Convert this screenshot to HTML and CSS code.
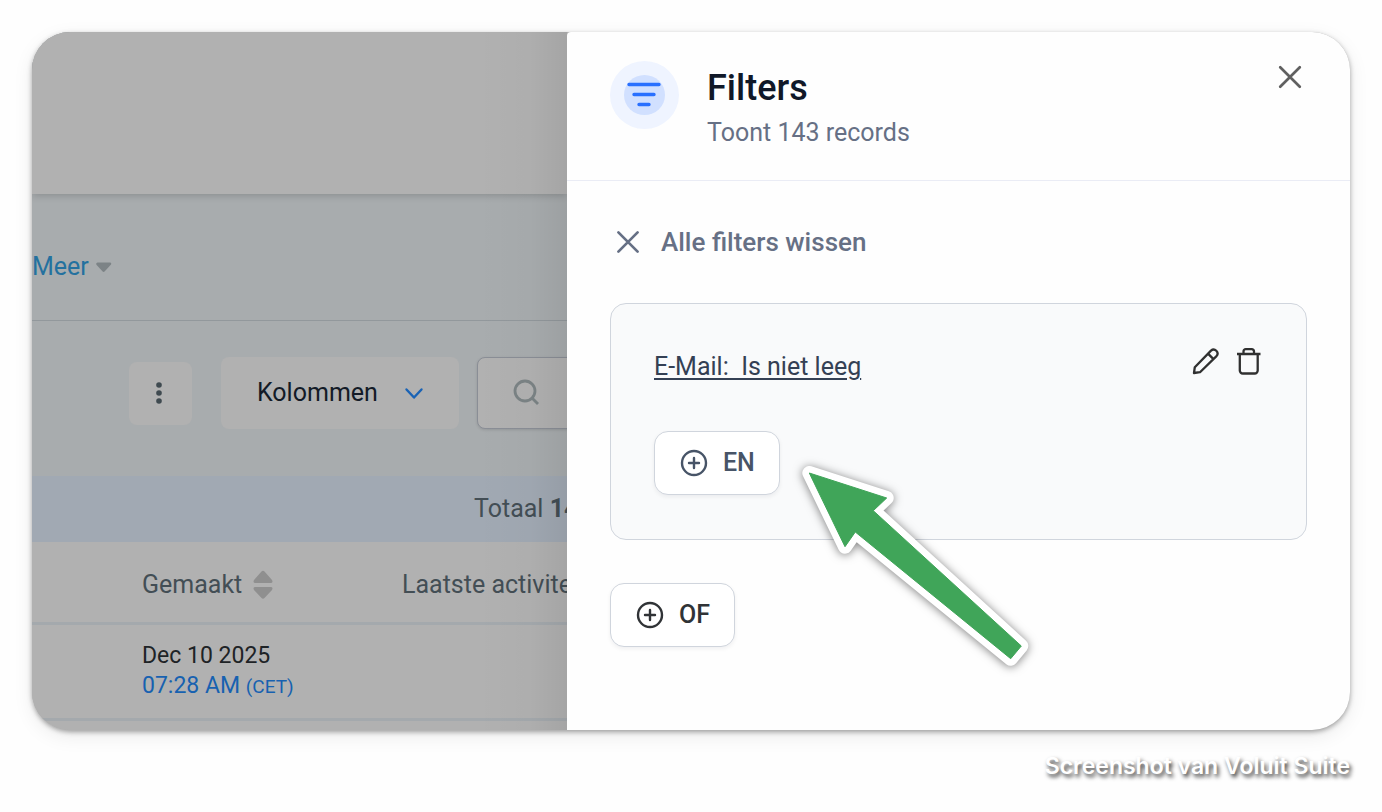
FILE: index.html
```html
<!DOCTYPE html>
<html lang="nl">
<head>
<meta charset="utf-8">
<meta name="viewport" content="width=device-width, initial-scale=1">
<title>Filters</title>
<link rel="stylesheet" href="styles.css">
</head>
<body>
<main class="page">
  <div class="frame">
    <section class="list">
      <div class="topbar"></div>
      <nav class="tabs">
        <a class="more" href="#">Meer
          <svg width="17" height="11" viewBox="0 0 17 11"><path d="M2.500 .5h12.500q2 .5.8 2.200L9.800 9.300q-1.200 1.200-2.400 0L1.400 2.700Q.5 1 2.500 .5z" fill="#7c8386"/></svg>
        </a>
      </nav>
      <div class="toolbar">
        <button class="tool kebab" type="button" aria-label="Opties">
          <svg width="6" height="24" viewBox="0 0 6 24" fill="#3f4a50"><circle cx="3" cy="4" r="2.800"/><circle cx="3" cy="12" r="2.800"/><circle cx="3" cy="20" r="2.800"/></svg>
        </button>
        <button class="tool columns" type="button">Kolommen
          <svg width="20" height="14" viewBox="0 0 20 14" fill="none" stroke="#1a63b5" stroke-width="2.400" stroke-linecap="round" stroke-linejoin="round"><path d="M2.500 3.500 10 11.500l7.500-8"/></svg>
        </button>
        <label class="search">
          <svg width="28" height="28" viewBox="0 0 28 28" fill="none" stroke="#7b8385" stroke-width="2.800"><circle cx="12" cy="12" r="10"/><path d="M18.500 18.500 25 25"/></svg>
          <input type="text" aria-label="Zoeken">
        </label>
      </div>
      <div class="total"><span>Totaal <b>143</b></span></div>
      <table class="records">
        <thead>
          <tr>
            <th class="first"><span class="sort">Gemaakt
              <svg width="22" height="30" viewBox="0 0 22 30" fill="#8f8f8f"><path d="M9.500 1.500q1.500-1.500 3 0L20 10q1.500 3-1.500 3h-15Q.5 13 2 10zM3.500 17h15q3 0 1.500 3l-7.500 8q-1.500 1.500-3 0L2 20q-1.500-3 1.500-3z"/></svg></span></th>
            <th>Laatste activiteit</th>
          </tr>
        </thead>
        <tbody>
          <tr>
            <td class="first">Dec 10 2025<br><span class="time">07:28 AM <small>(CET)</small></span></td>
            <td></td>
          </tr>
        </tbody>
      </table>
    </section>

    <aside class="panel">
      <header class="panel-head">
        <span class="badge">
          <svg width="69" height="68" viewBox="0 0 69 68"><ellipse cx="34.500" cy="34" rx="34.500" ry="34" fill="#eff4ff"/><ellipse cx="34.500" cy="34" rx="20.500" ry="20" fill="#d1e0ff"/><path d="M19 23.500h30M24 33.500h20M29 43.500h10" stroke="#2970ff" stroke-width="3.400" stroke-linecap="round"/></svg>
        </span>
        <div class="titles">
          <h1>Filters</h1>
          <p>Toont 143 records</p>
        </div>
        <button class="close" type="button" aria-label="Sluiten">
          <svg width="24" height="24" viewBox="0 0 24 24" fill="none" stroke="#606060" stroke-width="2.700" stroke-linecap="round"><path d="M2.200 2.200l19.600 19.600M21.800 2.200 2.200 21.800"/></svg>
        </button>
      </header>

      <div class="panel-body">
        <button class="clear" type="button">
          <svg width="24" height="24" viewBox="0 0 24 24" fill="none" stroke="#667085" stroke-width="2.700" stroke-linecap="round"><path d="M2.400 2.400l19.200 19.200M21.600 2.400 2.400 21.600"/></svg>
          Alle filters wissen
        </button>

        <section class="group">
          <div class="rule">
            <a class="rule-text" href="#">E-Mail:&nbsp; Is niet leeg</a>
            <div class="actions">
              <button class="icon" type="button" aria-label="Bewerken">
                <svg width="28" height="28" viewBox="0 0 28 28" fill="none" stroke="#303030" stroke-width="2.300" stroke-linejoin="round"><path d="M2 26l.8-5.800L19 3.600a3.900 3.900 0 0 1 5.500 5.500L8 25.200zM16 6.600l5.500 5.500"/></svg>
              </button>
              <button class="icon" type="button" aria-label="Verwijderen">
                <svg width="26" height="28" viewBox="0 0 26 28" fill="none" stroke="#303030" stroke-width="2.300"><path d="M1 7h23.500M3.800 7v16.500a3 3 0 0 0 3 3h11.900a3 3 0 0 0 3-3V7M7.500 7V4.400a2.200 2.200 0 0 1 2.200-2.200h6.100A2.200 2.200 0 0 1 18 4.400V7"/></svg>
              </button>
            </div>
          </div>
          <button class="add" type="button">
            <svg width="28" height="28" viewBox="0 0 28 28" fill="none" stroke="currentColor" stroke-width="2.400" stroke-linecap="round"><circle cx="14" cy="14" r="12"/><path d="M14 9v10M9 14h10"/></svg>
            EN
          </button>
        </section>

        <button class="add add-or" type="button">
          <svg width="28" height="28" viewBox="0 0 28 28" fill="none" stroke="currentColor" stroke-width="2.400" stroke-linecap="round"><circle cx="14" cy="14" r="12"/><path d="M14 9v10M9 14h10"/></svg>
          OF
        </button>
      </div>

      <svg class="arrow" width="270" height="240" viewBox="0 0 270 240"><path d="M29.300 33 106.700 58 93.300 70.700 241.300 206 230.700 218.700 75.300 92 65 106.700z" fill="#fff" stroke="#fff" stroke-width="14" stroke-linejoin="round"/><path d="M29.300 33 106.700 58 93.300 70.700 241.300 206 230.700 218.700 75.300 92 65 106.700z" fill="#40a559" stroke="#40a559" stroke-linejoin="round"/></svg>
    </aside>
  </div>
  <p class="credit">Screenshot van Voluit Suite</p>
</main>
</body>
</html>
```
FILE: styles.css
```css
* {
  box-sizing: border-box;
}

body {
  margin: 0;
  background: #fefefe;
  color: #101828;
  font-family: Roboto, "Liberation Sans", sans-serif;
  font-size: 25px;
  line-height: 30px;
}

h1,
p {
  margin: 0;
}

button {
  margin: 0;
  padding: 0;
  border: 0;
  background: none;
  color: inherit;
  font: inherit;
  cursor: pointer;
}

svg {
  display: block;
  flex: none;
}

.page {
  padding: 32px;
}

.frame {
  display: flex;
  overflow: hidden;
  border-radius: 38px;
  background: #b1b1b1;
  box-shadow: 0 2px 5px rgba(0, 0, 0, 0.35), 0 6px 20px rgba(0, 0, 0, 0.08);
}

/* Dimmed record list behind the panel */
.list {
  position: relative;
  flex: 535 1 0;
  min-width: 0;
  overflow: hidden;
  padding-bottom: 9px;
  background: linear-gradient(#a8acae 445px, #b1b1b1 445px);
  white-space: nowrap;
}

.list::after {
  content: "";
  position: absolute;
  inset: 0 0 0 auto;
  width: 90px;
  background: linear-gradient(to right, rgba(0, 0, 0, 0), rgba(0, 0, 0, 0.02) 60%, rgba(0, 0, 0, 0.07));
  pointer-events: none;
}

.topbar {
  position: relative;
  height: 162px;
  background: #b1b1b1;
  box-shadow: 0 1px 8px rgba(0, 0, 0, 0.2);
}

.tabs {
  display: flex;
  align-items: center;
  height: 127px;
  padding-top: 20px;
  border-bottom: 1px solid #92989c;
}

.more {
  display: flex;
  align-items: center;
  gap: 6px;
  color: #24719f;
  text-decoration: none;
}

.toolbar {
  display: flex;
  align-items: center;
  height: 155px;
  padding: 0 0 11px 97px;
}

.tool,
.search {
  display: flex;
  align-items: center;
  flex: none;
  border-radius: 8px;
  background: #b1b1b1;
}

.kebab {
  justify-content: center;
  width: 63px;
  height: 63px;
  margin-right: 29px;
  padding-right: 4px;
}

.columns {
  justify-content: space-between;
  width: 238px;
  height: 72px;
  margin-right: 18px;
  padding: 0 35px 0 36px;
  color: #131b27;
}

.search {
  width: 360px;
  height: 72px;
  padding: 0 35px;
  border: 1px solid #8a8e96;
  box-shadow: 0 1px 3px rgba(0, 0, 0, 0.12);
}

.search input {
  width: 240px;
  border: 0;
  outline: 0;
  background: transparent;
  font: inherit;
}

.total {
  display: flex;
  align-items: center;
  height: 66px;
  padding-left: 442px;
  background: #a1a9b3;
  color: #434e55;
}

.total b {
  font-weight: 700;
}

.records {
  width: 760px;
  border-collapse: separate;
  border-spacing: 0;
  table-layout: fixed;
  background: #b1b1b1;
}

.records th {
  height: 83px;
  padding: 6px 0 0;
  border-bottom: 3px solid #a4a9ad;
  color: #434e55;
  font-weight: 400;
  text-align: left;
}

.records td {
  height: 96px;
  padding: 0;
  border-bottom: 3px solid #a4a9ad;
  color: #1e2326;
  font-size: 23px;
}

.records .first {
  width: 370px;
  padding-left: 110px;
}

.sort {
  display: flex;
  align-items: center;
  gap: 10px;
}

.time {
  color: #1761b0;
}

.time small {
  font-size: 19px;
}

/* Filter panel */
.panel {
  position: relative;
  flex: 783 1 0;
  min-width: 0;
  border-top-left-radius: 4px;
  background: #fefefe;
}

.panel-head {
  display: flex;
  align-items: flex-start;
  height: 149px;
  padding: 29px 48px 0 43px;
  border-bottom: 1px solid #eaecf5;
}

.titles {
  flex: 1;
  padding: 5px 0 0 28px;
}

h1 {
  font-size: 36px;
  font-weight: 500;
  line-height: 44px;
}

.titles p {
  margin-top: 8px;
  color: #667085;
}

.close {
  padding-top: 4px;
}

.panel-body {
  display: flex;
  flex-direction: column;
  align-items: flex-start;
  padding: 46px 43px 0;
}

.clear {
  display: flex;
  align-items: center;
  gap: 21px;
  padding-left: 6px;
  color: #667085;
  font-size: 26px;
  font-weight: 500;
}

.group {
  display: flex;
  flex-direction: column;
  align-items: flex-start;
  gap: 49px;
  width: 100%;
  margin-top: 46px;
  padding: 43px 44px 44px 43px;
  border: 1px solid #d0d5dd;
  border-radius: 16px;
  background: #f9fafb;
}

.rule {
  display: flex;
  justify-content: space-between;
  align-items: flex-start;
  width: 100%;
}

.rule-text {
  padding-top: 5px;
  color: #344054;
  text-decoration-thickness: 2px;
  text-underline-offset: 3px;
}

.actions {
  display: flex;
  gap: 16px;
}

.add {
  display: flex;
  align-items: center;
  gap: 15px;
  height: 64px;
  padding: 0 24px 0 25px;
  border: 1px solid #d0d5dd;
  border-radius: 14px;
  background: #fff;
  box-shadow: 0 2px 4px rgba(16, 24, 40, 0.06);
  color: #475467;
  font-weight: 500;
}

.add-or {
  margin-top: 43px;
  color: #303336;
}

/* Callout arrow laid over the panel */
.arrow {
  position: absolute;
  top: 408px;
  left: 213px;
  overflow: visible;
  filter: drop-shadow(0 1px 5px rgba(0, 0, 0, 0.5));
  pointer-events: none;
}

.credit {
  margin-top: 21px;
  color: #fff;
  font-family: Inter, sans-serif;
  font-size: 23px;
  font-weight: 600;
  text-align: right;
  text-shadow: 2px 3px 4px rgba(0, 0, 0, 0.8);
}
```
